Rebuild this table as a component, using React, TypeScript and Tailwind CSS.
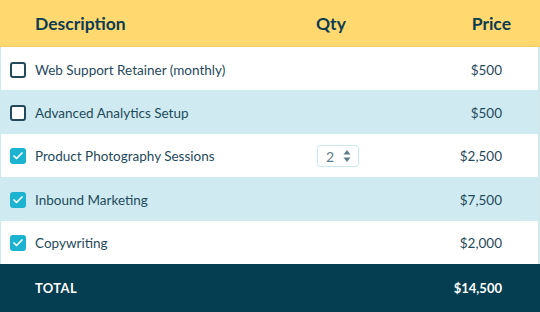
import { Check } from 'lucide-react';

type Item = { name: string; price: string; checked: boolean; qty?: number };

const items: Item[] = [
  { name: 'Web Support Retainer (monthly)', price: '$500', checked: false },
  { name: 'Advanced Analytics Setup', price: '$500', checked: false },
  { name: 'Product Photography Sessions', price: '$2,500', checked: true, qty: 2 },
  { name: 'Inbound Marketing', price: '$7,500', checked: true },
  { name: 'Copywriting', price: '$2,000', checked: true },
];

function Box({ checked }: { checked: boolean }) {
  if (checked) {
    return (
      <span className="flex h-4 w-4 shrink-0 items-center justify-center rounded-[3px] bg-[#1bb3cf]">
        <Check className="h-3 w-3 text-white" strokeWidth={3.5} />
      </span>
    );
  }
  return <span className="h-4 w-4 shrink-0 rounded-[3px] border-2 border-[#24495a] bg-white" />;
}

function Stepper({ value }: { value: number }) {
  return (
    <div className="flex h-[22px] w-[42px] items-center gap-[9px] rounded-[3px] border border-[#cde8ee] bg-white pl-[8px]">
      <span className="text-[14px] text-[#5d7c88]">{value}</span>
      <svg width="8" height="14" viewBox="0 0 8 14" className="text-[#5d7c88]">
        <path d="M4 1 L7.5 5.5 H0.5 Z" fill="currentColor" />
        <path d="M4 13 L7.5 8.5 H0.5 Z" fill="currentColor" />
      </svg>
    </div>
  );
}

export default function App() {
  return (
    <div className="w-[540px] h-[312px] overflow-hidden bg-white font-['Lato',sans-serif] text-[#1f4a5b]">
      {/* header */}
      <div className="flex h-[47px] items-center border-b border-[#f4ce62] bg-[#ffd96f] pt-[2px] font-bold text-[17.5px] text-[#0d3b50]">
        <div className="flex-1 pl-[35px]">Description</div>
        <div className="w-[90px]">Qty</div>
        <div className="w-[134px] pr-[29px] text-right">Price</div>
      </div>

      <div className="border-l border-r-2 border-[#cfe9ef]">
        {items.map((item, i) => (
          <div
            key={item.name}
            className={`flex h-[43.4px] items-center pt-[2px] text-[13.5px] ${i % 2 === 1 ? 'bg-[#cfeaf0]' : 'bg-white'}`}
          >
            <div className="flex flex-1 items-center gap-[9px] pl-[9px]">
              <Box checked={item.checked} />
              <span>{item.name}</span>
            </div>
            <div className="flex w-[90px]">
              {item.qty ? <Stepper value={item.qty} /> : null}
            </div>
            <div className="w-[131px] pr-[36px] text-right">{item.price}</div>
          </div>
        ))}
      </div>

      {/* total */}
      <div className="flex h-[48px] items-center bg-[#053d51] pt-[2px] text-[13px] font-bold text-white">
        <div className="flex-1 pl-[35px] tracking-wide">TOTAL</div>
        <div className="pr-[38px] text-right">$14,500</div>
      </div>
    </div>
  );
}
